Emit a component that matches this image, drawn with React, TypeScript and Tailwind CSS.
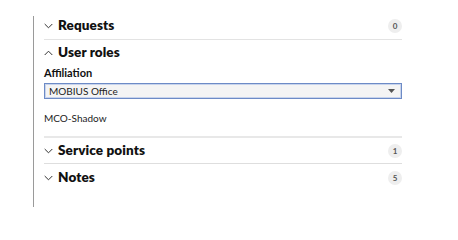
import React from "react";

const Chevron = ({ up = false }: { up?: boolean }) => (
  <svg width="9" height="6" viewBox="0 0 9 6" className="mr-[5px] shrink-0">
    <path
      d={up ? "M0.7 5 L4.5 1.2 L8.3 5" : "M0.7 1 L4.5 4.8 L8.3 1"}
      fill="none"
      stroke="#333"
      strokeWidth="1"
    />
  </svg>
);

const Badge = ({ n }: { n: string }) => (
  <span className="flex h-[14px] w-[14px] items-center justify-center rounded-full bg-[#eeeeee] text-[8px] font-bold text-[#555]">
    {n}
  </span>
);

const Header = ({ title, up = false, badge }: { title: string; up?: boolean; badge?: string }) => (
  <div className="flex h-full items-center justify-between">
    <div className="flex items-center">
      <Chevron up={up} />
      <span className="text-[13.5px] font-extrabold tracking-[0.1px] text-[#111]">{title}</span>
    </div>
    {badge !== undefined && <Badge n={badge} />}
  </div>
);

export default function App() {
  return (
    <div className="h-[240px] w-[458px] bg-white" style={{ fontFamily: "Lato, 'Open Sans', sans-serif" }}>
      <div className="flex pl-[33px] pt-[12px]">
        <div className="mt-[4px] h-[191px] w-px bg-[#9a9a9a]" />
        <div className="w-[358px] ml-[10px]">
          <div className="h-[28px] border-b border-[#e3e3e3]">
            <Header title="Requests" badge="0" />
          </div>
          <div className="h-[98px] border-b-2 border-[#e8e8e8]">
            <div className="h-[25px]">
              <Header title="User roles" up />
            </div>
            <div className="mt-[1px] text-[11px] font-bold leading-[14px] text-[#111]">Affiliation</div>
            <div className="mt-[3px] flex h-[16px] items-center justify-between border border-[#6d8bc6] bg-[#f4f4f4] pl-[4px] pr-[6px] shadow-[inset_0_0_0_1px_#c8d4ec]">
              <span className="text-[10px] leading-none text-[#222]">MOBIUS Office</span>
              <svg width="7" height="4" viewBox="0 0 7 4">
                <path d="M0 0 L7 0 L3.5 4 Z" fill="#555" />
              </svg>
            </div>
            <div className="mt-[13px] text-[10px] leading-[12px] text-[#222]">MCO-Shadow</div>
          </div>
          <div className="h-[26px] border-b border-[#dedede]">
            <Header title="Service points" badge="1" />
          </div>
          <div className="h-[27px]">
            <Header title="Notes" badge="5" />
          </div>
        </div>
      </div>
    </div>
  );
}
